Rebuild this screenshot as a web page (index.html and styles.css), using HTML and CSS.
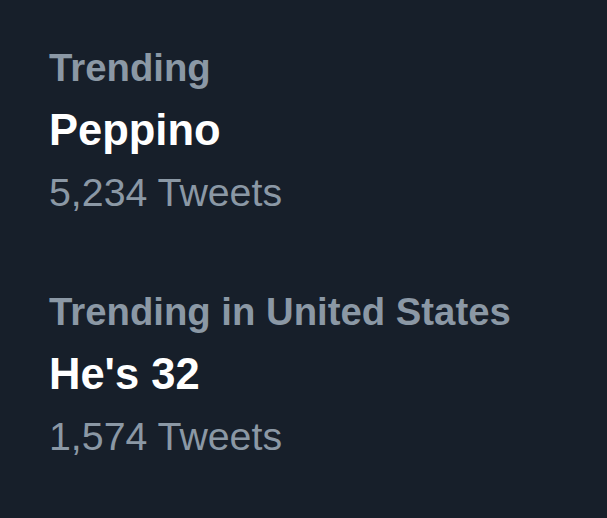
FILE: index.html
```html
<!DOCTYPE html>
<html>
<head>
<meta charset="utf-8">
<link rel="stylesheet" href="styles.css">
</head>
<body>
<div class="list">
  <div class="trend">
    <div class="context">Trending</div>
    <div class="topic">Peppino</div>
    <div class="count">5,234 Tweets</div>
  </div>
  <div class="trend">
    <div class="context">Trending in United States</div>
    <div class="topic">He's 32</div>
    <div class="count">1,574 Tweets</div>
  </div>
</div>
</body>
</html>
```

FILE: styles.css
```css
html, body {
  margin: 0;
  padding: 0;
  background: #171f2a;
}
body {
  width: 607px;
  height: 518px;
  overflow: hidden;
  font-family: "Liberation Sans", Arial, sans-serif;
}
.list {
  display: flex;
  flex-direction: column;
  gap: 58px;
  padding: 37px 0 0 49px;
}
.trend {
  display: flex;
  flex-direction: column;
}
.context {
  color: #8b98a5;
  font-weight: 700;
  font-size: 38.3px;
  line-height: 62px;
}
.topic {
  color: #ffffff;
  font-weight: 700;
  font-size: 43.5px;
  line-height: 62px;
}
.count {
  color: #8b98a5;
  font-weight: 400;
  font-size: 39.3px;
  line-height: 62px;
}
```
